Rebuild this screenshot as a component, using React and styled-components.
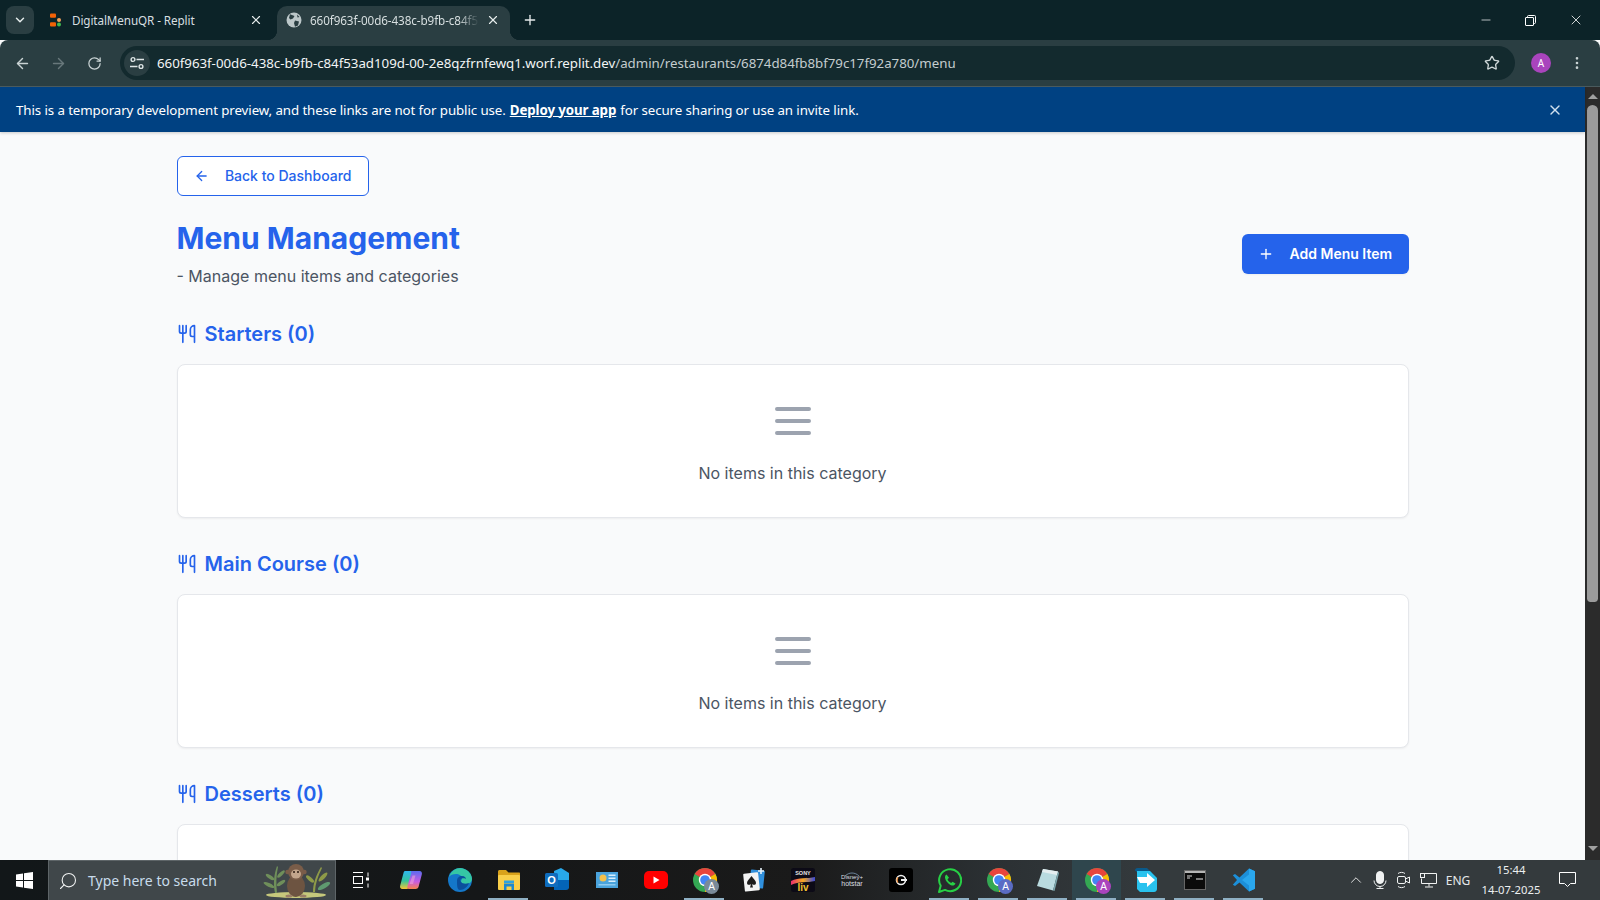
import React from "react";
import styled, { createGlobalStyle } from "styled-components";
import { ArrowLeft, ArrowRight, Plus, Utensils, RotateCw, Star, X, ChevronDown, Minus, EllipsisVertical, Search, ChevronUp } from "lucide-react";

const Global = createGlobalStyle`
  html, body { margin: 0; padding: 0; height: 900px; overflow: hidden; background: #f9fafb; }
  * { box-sizing: border-box; }
`;

const Shell = styled.div`
  width: 1600px; height: 900px; display: flex; flex-direction: column; overflow: hidden;
  font-family: "Inter", sans-serif;
`;

/* ---------- browser chrome ---------- */
const TabStrip = styled.div`
  height: 40px; flex: none; background: #0c2328; display: flex; align-items: flex-end; padding-left: 6px; color: #dfe6e7;
  font-family: "Noto Sans", sans-serif; font-size: 11.7px;
`;
const TabMenuButton = styled.div`
  width: 28px; height: 28px; margin-bottom: 6px; border-radius: 8px; background: #2a3e42;
  display: flex; align-items: center; justify-content: center; color: #e6ecec;
`;
const Tab = styled.div`
  width: 233px; height: 34px; margin-left: ${p => p.$ml}px; padding: 0 8px 6px ${p => p.$pl}px; display: flex; align-items: center; position: relative;
  border-radius: 10px 10px 0 0; background: ${p => (p.$active ? "#2a3e42" : "transparent")};
  ${p => p.$active && `
    &::before, &::after { content: ""; position: absolute; bottom: 0; width: 10px; height: 10px; }
    &::before { left: -10px; background: radial-gradient(circle at 0 0, transparent 10px, #2a3e42 10.5px); }
    &::after { right: -10px; background: radial-gradient(circle at 100% 0, transparent 10px, #2a3e42 10.5px); }
  `}
`;
const TabFavicon = styled.div`
  width: 16px; height: 16px; margin-right: 8px; flex: none; display: flex; align-items: center; justify-content: center;
`;
const TabTitle = styled.div`
  flex: 1; overflow: hidden; white-space: nowrap; color: #d7dfe0; letter-spacing: -0.1px;
  ${p => p.$fade && `margin-right: 5px; mask-image: linear-gradient(90deg, #000 88%, transparent 100%); -webkit-mask-image: linear-gradient(90deg, #000 88%, transparent 100%);`}
`;
const TabClose = styled.div`
  width: 18px; height: 18px; flex: none; display: flex; align-items: center; justify-content: center; color: #e6ecec;
`;
const NewTab = styled.div`
  width: 20px; height: 34px; padding-bottom: 6px; margin-left: 10px; display: flex; align-items: center; justify-content: center; color: #e6ecec;
`;
const WindowControls = styled.div`
  margin-left: auto; height: 40px; display: flex; align-items: center; color: #fff; padding-right: 2px;
`;
const WindowButton = styled.div`
  width: 45px; height: 40px; display: flex; align-items: center; justify-content: center;
`;
const Toolbar = styled.div`
  height: 47px; flex: none; background: #2a3e42; border-bottom: 1px solid #4a5a5d; border-radius: 8px 8px 0 0;
  display: flex; align-items: center; padding: 0 0 0 4px; color: #cfd8d9;
`;
const NavButton = styled.div`
  width: 36px; height: 36px; display: flex; align-items: center; justify-content: center; color: ${p => (p.$off ? "#68787b" : "#c9d3d4")};
`;
const Omnibox = styled.div`
  width: 1395px; flex: none; height: 34px; margin-left: 8px; border-radius: 17px; background: #132a2e; display: flex; align-items: center; padding: 0 15px 0 4px;
`;
const SiteChip = styled.div`
  width: 26px; height: 26px; border-radius: 50%; background: #2a3e42; display: flex; align-items: center; justify-content: center; color: #dfe6e7; flex: none;
`;
const Url = styled.div`
  margin-left: 7px; flex: 1; font-family: "Noto Sans", sans-serif; font-size: 13.3px; color: #c4cdce; white-space: nowrap; letter-spacing: -0.02px;
  b { font-weight: 400; color: #f2f5f5; }
`;
const Avatar = styled.div`
  width: 20px; height: 20px; margin-left: 16px; border-radius: 50%; background: #a944bd; color: #fff; font: 10px "Noto Sans", sans-serif;
  display: flex; align-items: center; justify-content: center; flex: none;
`;
const KebabButton = styled.div`
  width: 24px; margin-left: 14px; display: flex; justify-content: center; color: #c9d3d4;
`;

/* ---------- page viewport ---------- */
const Viewport = styled.div`
  flex: 1; min-height: 0; display: flex; overflow: hidden;
`;
const PageColumn = styled.div`
  flex: 1; min-width: 0; display: flex; flex-direction: column; background: #f9fafb;
`;
const Banner = styled.div`
  height: 45px; flex: none; background: #004182; color: #fff; display: flex; align-items: center; padding: 0 22px 0 16px;
  font-family: "Noto Sans", sans-serif; font-size: 13.3px; letter-spacing: -0.09px; box-shadow: 0 1px 3px rgba(0,0,0,.2); position: relative;
  a { color: #fff; font-weight: 700; text-decoration: underline; margin: 0 4px; }
`;
const BannerClose = styled.div`
  margin-left: auto; color: #cfe0ee; display: flex;
`;
const Page = styled.main`
  flex: 1; min-height: 0; overflow: hidden; padding: 24px 176.5px 0;
`;
const BackButton = styled.button`
  height: 40px; width: 192px; padding: 0 16px; display: flex; align-items: center; gap: 16px; background: #fff; color: #2563eb;
  border: 1px solid #2563eb; border-radius: 6px; font: 500 14px/20px "Inter", sans-serif; margin-bottom: 24px; white-space: nowrap;
`;
const HeaderRow = styled.div`
  display: flex; justify-content: space-between; align-items: center; margin-bottom: 32px;
`;
const Title = styled.h1`
  margin: 0 0 8px; font: 700 30px/36px "Inter", sans-serif; color: #2563eb;
`;
const Subtitle = styled.p`
  margin: 0; font: 400 16px/24px "Inter", sans-serif; color: #4b5563;
`;
const AddButton = styled.button`
  height: 40px; width: 167px; padding: 0 16px; display: flex; align-items: center; gap: 16px; background: #2563eb; color: #fff; border: 0;
  border-radius: 6px; font: 600 14px/20px "Inter", sans-serif; white-space: nowrap; box-shadow: 0 1px 2px rgba(0,0,0,.05);
`;
const Section = styled.section`
  margin-bottom: 32px;
`;
const SectionTitle = styled.h2`
  margin: 0 0 16px; height: 28px; display: flex; align-items: center; gap: 8px; font: 600 20px/28px "Inter", sans-serif; color: #2563eb;
`;
const EmptyCard = styled.div`
  background: #fff; border: 1px solid #e5e7eb; border-radius: 8px; padding: 32px; display: flex; flex-direction: column; align-items: center; gap: 16px;
  box-shadow: 0 1px 2px rgba(0,0,0,.05); color: #9ca3af;
`;
const EmptyText = styled.p`
  margin: 0; font: 400 16px/24px "Inter", sans-serif; color: #4b5563;
`;

/* ---------- scrollbar ---------- */
const Scrollbar = styled.div`
  width: 15px; flex: none; background: #2b2b2b; display: flex; flex-direction: column; align-items: center; padding-bottom: 3px;
`;
const ScrollArrow = styled.div`
  height: 18px; flex: none; display: flex; align-items: center; justify-content: center;
  &::before { content: ""; border-left: 5px solid transparent; border-right: 5px solid transparent;
    ${p => (p.$down ? "border-top: 5px solid #a0a0a0;" : "border-bottom: 5px solid #a0a0a0;")} }
`;
const ScrollThumb = styled.div`
  width: 11px; height: 497px; border-radius: 6px 6px 4px 4px; background: #9b9b9b;
`;
const ScrollSpacer = styled.div`flex: 1;`;

/* ---------- taskbar ---------- */
const Taskbar = styled.footer`
  height: 40px; flex: none; display: flex; align-items: stretch; color: #fff;
  background: linear-gradient(90deg, #121719 0%, #151718 30%, #1a1a1a 50%, #2b3033 62%, #343a3d 72%, #343a3d 100%);
  font-family: "Noto Sans", sans-serif;
`;
const StartButton = styled.div`
  width: 48px; display: flex; align-items: center; justify-content: center;
`;
const SearchBox = styled.div`
  width: 288px; background: #40474a; border: 1px solid #5e6568; border-bottom: 0; display: flex; align-items: center; padding-left: 9px; gap: 10px; position: relative;
  font-size: 14px; color: #c8dcec; overflow: hidden;
`;
const SearchArt = styled.div`
  position: absolute; right: 2px; top: 0;
`;
const FlippedSearch = styled(Search)`
  transform: scaleX(-1); flex: none;
`;
const TaskSlot = styled.div`
  width: ${p => p.$w || 49}px; flex: none; display: flex; align-items: center; justify-content: center; position: relative;
  background: ${p => (p.$focus ? "#2f464d" : "transparent")};
  ${p => p.$open && `&::after { content: ""; position: absolute; left: 4px; right: 5px; bottom: 0; height: 2px; background: #8fb0c4; }`}
`;
const Tray = styled.div`
  margin-left: auto; display: flex; align-items: center; height: 100%; color: #f0f2f2; padding-right: 9px;
`;
const TrayIcon = styled.div`
  width: ${p => p.$w}px; display: flex; justify-content: center;
`;
const TrayLang = styled.div`
  width: 36px; font-size: 12px; text-align: center; margin-right: 4px; color: #e6e9ea;
`;
const Clock = styled.div`
  width: 62px; text-align: center; font-size: 11.3px; line-height: 20px; color: #eceff0; white-space: nowrap;
`;
const NotifyButton = styled.div`
  width: 48px; margin-left: 1px; display: flex; justify-content: center;
`;

/* ---------- drawn icons ---------- */
const ReplitIcon = () => (
  <svg width="16" height="16" viewBox="0 0 16 16">
    <rect x="2" y="1.5" width="6" height="4.2" rx="1" fill="#f26207" />
    <rect x="2" y="10.3" width="6" height="4.2" rx="1" fill="#f26207" />
    <circle cx="11" cy="8" r="2" fill="#f5a25d" />
    <circle cx="11" cy="12.5" r="2" fill="#3fb950" />
  </svg>
);
const GlobeIcon = () => (
  <svg width="16" height="16" viewBox="0 0 16 16">
    <circle cx="8" cy="8" r="7.5" fill="#bcc7c9" />
    <path d="M4 2.200 8.500 4 7 6.500 4.500 7.500 3 6zM9 8.500l4 1-1 4-3 1.200L8 11zM11 2.500l2.500 2.500-2 .5z" fill="#2a3e42" />
  </svg>
);
const RestoreIcon = () => (
  <svg width="11" height="11" viewBox="0 0 11 11" fill="none" stroke="#fff">
    <rect x="0.5" y="2.5" width="8" height="8" rx="0.5" />
    <path d="M2.5 2.5v-1a1 1 0 0 1 1-1h6a1 1 0 0 1 1 1v6a1 1 0 0 1-1 1h-1" />
  </svg>
);
const TuneIcon = () => (
  <svg width="16" height="14" viewBox="0 0 16 14" fill="none" stroke="#dfe6e7" strokeWidth="1.400">
    <circle cx="4" cy="3.500" r="1.900" />
    <path d="M7.500 3.500H15M1 10.500h7.500" />
    <circle cx="12" cy="10.500" r="1.900" />
  </svg>
);
const WinLogo = () => (
  <svg width="17" height="17" viewBox="0 0 17 17" fill="#fff">
    <path d="M0 2.400 7 1.400V8H0zM8 1.200 17 0v8H8zM0 9h7v6.600L0 14.600zM8 9h9v8l-9-1.200z" />
  </svg>
);
const TaskView = () => (
  <svg width="18" height="16" viewBox="0 0 18 16" fill="none" stroke="#fff" strokeWidth="1">
    <path d="M1 .5h10M1 15.500h10M16 .5v4M16 11.500v4" />
    <rect x="1.500" y="4.500" width="9" height="7" />
    <rect x="14" y="5.500" width="3" height="3" fill="#fff" stroke="none" />
  </svg>
);
const Copilot = () => (
  <svg width="24" height="24" viewBox="0 0 24 24">
    <defs>
      <linearGradient id="cpA" x1="0" y1="0" x2="0" y2="1"><stop offset="0" stopColor="#2fb7f0" /><stop offset=".55" stopColor="#35c59a" /><stop offset="1" stopColor="#f7c733" /></linearGradient>
      <linearGradient id="cpB" x1="0" y1="0" x2="0" y2="1"><stop offset="0" stopColor="#5a6cf0" /><stop offset=".6" stopColor="#c95ce0" /><stop offset="1" stopColor="#f7834a" /></linearGradient>
    </defs>
    <path d="M6 3h7c1.500 0 2 1 1.600 2.400L11 18c-.5 1.600-1.500 3-3.500 3H3.500C1.500 21 .6 19.400 1.200 17.500L4.500 5C4.800 3.800 5.200 3 6 3z" fill="url(#cpA)" />
    <path d="M12 3h8.500c1.900 0 2.900 1.600 2.300 3.500L19.500 19c-.5 1.300-1.500 2-2.800 2H10c-1.400 0-2-1-1.600-2.400L12 6c.3-1.200 0-3 0-3z" fill="url(#cpB)" />
    <path d="M13.500 7.500 10.500 16h3.500l2.500-8.500z" fill="#f3a7d8" opacity=".55" />
  </svg>
);
const Edge = () => (
  <svg width="24" height="24" viewBox="0 0 24 24">
    <circle cx="12" cy="12" r="12" fill="#1477c9" />
    <path d="M1 9C3 3 8 0 12 0c6 0 12 5 12 11 0 3-3 5-6 5-3 0-5-1-5-3 0-1 1-1 1-3 0-2-3-4-6-4C5 6 2 7 1 9z" fill="#35c6a4" />
    <path d="M9 13c0-3 2-5 5-5 3 0 4 2 4 3 0-.1-2-1-4-.5-2 .5-2 2-1 3.500 1 1.500 4 2.500 8 1-1 3.500-5 7-9 7-3 0-3-5-3-9z" fill="#0b4f9c" />
  </svg>
);
const Explorer = () => (
  <svg width="24" height="22" viewBox="0 0 24 22">
    <path d="M1 2.500C1 1.700 1.700 1 2.500 1H9l2.500 2.500H22c.6 0 1 .4 1 1V7H1z" fill="#d9a21b" />
    <rect x="1" y="6" width="22" height="15" rx="1" fill="#f9cf4a" />
    <path d="M7 21v-6.500h10V21h-2.500v-3.500h-5V21z" fill="#1d88cf" />
    <rect x="7" y="11.500" width="10" height="2.500" fill="#2ea3e0" />
  </svg>
);
const Outlook = () => (
  <svg width="25" height="24" viewBox="0 0 25 24">
    <path d="M9 3 16 0l8 5v13c0 2-1 3-3 3H10z" fill="#28a8ea" />
    <path d="M9 12h15v7c0 2-1 3-3 3H9z" fill="#0364b8" />
    <rect x="0" y="5" width="13" height="14" rx="1.500" fill="#0f6cbd" />
    <text x="6.500" y="16" textAnchor="middle" fontSize="11" fontWeight="700" fontFamily="Liberation Sans" fill="#fff">O</text>
  </svg>
);
const NewsApp = () => (
  <svg width="22" height="16" viewBox="0 0 22 16">
    <rect width="22" height="16" fill="#4aa3dc" />
    <circle cx="7" cy="6" r="3.500" fill="#f3c04c" />
    <rect x="12.500" y="2.500" width="7" height="1.500" fill="#d9eefb" />
    <rect x="12.500" y="5.500" width="7" height="1.500" fill="#d9eefb" />
    <rect x="12.500" y="8.500" width="7" height="1.500" fill="#d9eefb" />
    <rect x="2.500" y="12" width="17" height="1.500" fill="#8ecbf0" />
  </svg>
);
const YouTube = () => (
  <svg width="24" height="18" viewBox="0 0 24 18">
    <rect width="24" height="18" rx="5" fill="#ff0000" />
    <path d="M9.500 5.500v7l6-3.500z" fill="#fff" />
  </svg>
);
const Chrome = ({ badge }) => (
  <svg width="24" height="24" viewBox="0 0 24 24" overflow="visible">
    <circle cx="12" cy="12" r="12" fill="#34a853" />
    <path d="M12 12 1.600 6A12 12 0 0 1 22.400 6z" fill="#e8453c" />
    <path d="M12 12 22.400 6A12 12 0 0 1 12 24z" fill="#fbbc04" />
    <circle cx="12" cy="12" r="6.200" fill="#fff" />
    <circle cx="12" cy="12" r="4.800" fill="#4285f4" />
    <circle cx="18.500" cy="18.500" r="7.500" fill={badge} />
    <text x="18.500" y="22" textAnchor="middle" fontSize="10" fontFamily="Liberation Sans" fill="#fff">A</text>
  </svg>
);
const Cards = () => (
  <svg width="24" height="24" viewBox="0 0 24 24">
    <rect x="8" y="2" width="14" height="18" rx="1" transform="rotate(6 15 11)" fill="#2f8fdc" />
    <rect x="2" y="5" width="15" height="18" rx="1" transform="rotate(-6 9 14)" fill="#f3f4f4" />
    <path d="M9.500 8c2 3 4.500 4.500 4.500 7 0 2-2.500 2.500-4 1l1 3.500H8l1-3.500c-1.500 1.500-4 1-4-1 0-2.500 2.500-4 4.500-7z" fill="#1c1c1c" />
    <path d="M19 0v6M16 3h6" stroke="#e7f3fb" strokeWidth="1.600" />
  </svg>
);
const Sony = () => (
  <svg width="24" height="24" viewBox="0 0 24 24">
    <defs><linearGradient id="sn" x1="0" y1="0" x2="1" y2="0"><stop offset="0" stopColor="#ea2f6f" /><stop offset=".5" stopColor="#f7a823" /><stop offset="1" stopColor="#3b4ad8" /></linearGradient></defs>
    <rect width="24" height="24" rx="2.500" fill="#0c0a16" />
    <path d="M0 13c8-4 16-2 24-4v4c-8 2-16 0-24 4z" fill="url(#sn)" />
    <text x="12" y="6.500" textAnchor="middle" fontSize="5.500" fontWeight="700" fontFamily="Liberation Sans" fill="#e4e4e4">SONY</text>
    <text x="12" y="22.500" textAnchor="middle" fontSize="10" fontWeight="700" fontFamily="Liberation Sans" fill="#f2c230">liv</text>
  </svg>
);
const Hotstar = () => (
  <svg width="22" height="18" viewBox="0 0 22 18" fill="none">
    <path d="M4 5c4-4 10-4 14 0" stroke="#7f9cb8" strokeWidth=".8" />
    <text x="11" y="8" textAnchor="middle" fontSize="6" fontFamily="Liberation Sans" fill="#dcdfe1">Disney+</text>
    <text x="11" y="15" textAnchor="middle" fontSize="7" fontFamily="Liberation Sans" fill="#dcdfe1">hotstar</text>
  </svg>
);
const BlackC = () => (
  <svg width="24" height="24" viewBox="0 0 24 24">
    <rect width="24" height="24" rx="3" fill="#000" />
    <circle cx="12" cy="12" r="4.500" fill="none" stroke="#eee" strokeWidth="1.600" />
    <path d="M9 14.500a3.500 3.500 0 0 1 0-5" fill="none" stroke="#f28a2e" strokeWidth="1.200" />
    <rect x="12" y="11" width="6" height="2" fill="#eee" />
  </svg>
);
const WhatsApp = () => (
  <svg width="24" height="25" viewBox="0 0 24 25" fill="none">
    <path d="M1 24l1.700-6.200A11 11 0 1 1 7 21.900z" stroke="#27d045" strokeWidth="2" fill="none" strokeLinejoin="round" />
    <path d="M8.500 6.500c-1.500 1-2 2.500-1 5 1 2.500 4 5.500 6.500 6 1.500.3 3-.5 3.500-2l-3-1.800-1.300 1.300c-1.500-.5-3.200-2.200-3.700-3.700L11 9.700z" fill="#27d045" />
  </svg>
);
const Notepad = () => (
  <svg width="24" height="26" viewBox="0 0 24 26">
    <path d="M7 2l15 2.500-5 19L1 19z" fill="#b9dbe0" />
    <path d="M7 2l15 2.500-1 3.500L6 5z" fill="#e4eef0" />
    <path d="M17 23.500 22 4.500 23 6 18.500 24z" fill="#7ba7ae" />
  </svg>
);
const ForwardApp = () => (
  <svg width="24" height="24" viewBox="0 0 24 24">
    <path d="M1 2.500C1 1 2 0 3.500 0H13l5 5H4z" fill="#0a5a8a" />
    <path d="M3 3h13l7 7v11c0 1.500-1 3-3 3H6l-3-3z" fill="#29c2ee" />
    <path d="M3 9h10V5l8 7-8 7v-4H6z" fill="#fff" />
  </svg>
);
const Cmd = () => (
  <svg width="22" height="20" viewBox="0 0 22 20">
    <rect x=".5" y=".5" width="21" height="19" fill="#0b0b0b" stroke="#666" />
    <rect x="1" y="1" width="20" height="2" fill="#b6b6b6" />
    <path d="M3 6h5M3 8h3" stroke="#ddd" strokeWidth="1.200" />
    <path d="M12 9h7" stroke="#eee" strokeWidth="1" />
  </svg>
);
const VSCode = () => (
  <svg width="24" height="24" viewBox="0 0 24 24">
    <path d="M17 .5 7.500 9.500 3 6 .8 7.200 5 12 .8 16.800 3 18l4.500-3.500L17 23.500l6-2.800V3.300z" fill="#1c8fd9" />
    <path d="M17 .5l6 2.800v17.400l-6 2.800zM17 6.500 10 12l7 5.500z" fill="#2aa7ee" />
  </svg>
);
const Monkey = () => (
  <svg width="72" height="38" viewBox="0 0 72 38">
    <ellipse cx="35" cy="34" rx="30" ry="3" fill="#c6c87c" />
    <g fill="#6f8f5a">
      <path d="M14 32C12 22 13 14 16 5l1 1C15 15 15 23 16 32z" />
      <ellipse cx="9" cy="16" rx="5" ry="1.700" transform="rotate(35 9 16)" />
      <ellipse cx="20" cy="13" rx="5" ry="1.700" transform="rotate(-45 20 13)" />
      <ellipse cx="8" cy="24" rx="6" ry="1.800" transform="rotate(25 8 24)" />
      <ellipse cx="20" cy="22" rx="5" ry="1.700" transform="rotate(-35 20 22)" />
    </g>
    <g fill="#8e9a48">
      <path d="M52 31c0-8 3-17 8-25l1 1c-4 8-7 16-7 24z" />
      <ellipse cx="49" cy="18" rx="5" ry="1.800" transform="rotate(40 49 18)" />
      <ellipse cx="62" cy="16" rx="6" ry="2" transform="rotate(-45 62 16)" />
      <ellipse cx="63" cy="25" rx="7" ry="2.400" transform="rotate(-30 63 25)" fill="#5f9a70" />
    </g>
    <ellipse cx="35" cy="25" rx="9" ry="11" fill="#6d5441" />
    <ellipse cx="35" cy="11" rx="8" ry="8" fill="#7a5d49" />
    <circle cx="26.500" cy="11" r="2.200" fill="#7a5d49" />
    <circle cx="43.500" cy="11" r="2.200" fill="#7a5d49" />
    <ellipse cx="35" cy="13" rx="5" ry="4.500" fill="#c2a58c" />
    <circle cx="33" cy="11" r="1" fill="#2b1c12" />
    <circle cx="37" cy="11" r="1" fill="#2b1c12" />
    <ellipse cx="28" cy="35" rx="3.500" ry="1.500" fill="#9a7e66" />
    <ellipse cx="42" cy="35" rx="3.500" ry="1.500" fill="#9a7e66" />
  </svg>
);
const EmptyMenuIcon = () => (
  <svg width="48" height="48" viewBox="0 0 24 24" fill="none" stroke="currentColor" strokeWidth="2" strokeLinecap="round">
    <path d="M4 6h16M4 12h16M4 18h16" />
  </svg>
);
const MicTray = () => (
  <svg width="14" height="18" viewBox="0 0 14 18" fill="none" stroke="#f0f2f2">
    <rect x="3.500" y="0.500" width="7" height="12" rx="3.500" fill="#f0f2f2" />
    <path d="M1 9.500a6 6 0 0 0 12 0M7 15.500v2M3.500 17.500h7" />
  </svg>
);
const CameraTray = () => (
  <svg width="16" height="18" viewBox="0 0 16 18" fill="none" stroke="#f0f2f2">
    <rect x="1.500" y="5.500" width="8" height="7" rx="1.500" />
    <path d="M9.500 8l4-2v6l-4-2M2 2.500c2-1.500 5-1.500 7 0M2 15.500c2 1.500 5 1.500 7 0" />
  </svg>
);
const NetworkTray = () => (
  <svg width="17" height="15" viewBox="0 0 17 15" fill="none" stroke="#f0f2f2">
    <path d="M4.500 .5H16.500V10.500H1.500V5.500" />
    <path d="M9 10.500v3M5 14h8" />
    <rect x=".5" y=".5" width="4" height="4" />
  </svg>
);
const Notify = () => (
  <svg width="17" height="16" viewBox="0 0 17 16" fill="none" stroke="#fff">
    <path d="M.5.500h16v11h-5l-3 3-3-3h-5z" />
  </svg>
);

const sections = ["Starters", "Main Course", "Desserts"];

export default function App() {
  return (
    <Shell>
      <Global />
      <TabStrip>
        <TabMenuButton><ChevronDown size={14} strokeWidth={2.500} /></TabMenuButton>
        <Tab $ml={6} $pl={8}>
          <TabFavicon><ReplitIcon /></TabFavicon>
          <TabTitle>DigitalMenuQR - Replit</TabTitle>
          <TabClose><X size={14} /></TabClose>
        </Tab>
        <Tab $ml={4} $pl={9} $active>
          <TabFavicon><GlobeIcon /></TabFavicon>
          <TabTitle $fade>660f963f-00d6-438c-b9fb-c84f53ad109d</TabTitle>
          <TabClose><X size={14} /></TabClose>
        </Tab>
        <NewTab><Plus size={16} /></NewTab>
        <WindowControls>
          <WindowButton><Minus size={14} strokeWidth={1.200} /></WindowButton>
          <WindowButton><RestoreIcon /></WindowButton>
          <WindowButton><X size={16} strokeWidth={1.200} /></WindowButton>
        </WindowControls>
      </TabStrip>
      <Toolbar>
        <NavButton><ArrowLeft size={17} /></NavButton>
        <NavButton $off><ArrowRight size={17} /></NavButton>
        <NavButton><RotateCw size={15} /></NavButton>
        <Omnibox>
          <SiteChip><TuneIcon /></SiteChip>
          <Url><b>660f963f-00d6-438c-b9fb-c84f53ad109d-00-2e8qzfrnfewq1.worf.replit.dev</b>/admin/restaurants/6874d84fb8bf79c17f92a780/menu</Url>
          <Star size={16} color="#cfd8d9" />
        </Omnibox>
        <Avatar>A</Avatar>
        <KebabButton><EllipsisVertical size={16} /></KebabButton>
      </Toolbar>
      <Viewport>
        <PageColumn>
          <Banner>
            This is a temporary development preview, and these links are not for public use.
            <a>Deploy your app</a>
            for secure sharing or use an invite link.
            <BannerClose><X size={16} /></BannerClose>
          </Banner>
          <Page>
            <BackButton><ArrowLeft size={16} />Back to Dashboard</BackButton>
            <HeaderRow>
              <div>
                <Title>Menu Management</Title>
                <Subtitle>- Manage menu items and categories</Subtitle>
              </div>
              <AddButton><Plus size={16} />Add Menu Item</AddButton>
            </HeaderRow>
            {sections.map(name => (
              <Section key={name}>
                <SectionTitle><Utensils size={20} strokeWidth={2} />{name} (0)</SectionTitle>
                <EmptyCard>
                  <EmptyMenuIcon />
                  <EmptyText>No items in this category</EmptyText>
                </EmptyCard>
              </Section>
            ))}
          </Page>
        </PageColumn>
        <Scrollbar>
          <ScrollArrow />
          <ScrollThumb />
          <ScrollSpacer />
          <ScrollArrow $down />
        </Scrollbar>
      </Viewport>
      <Taskbar>
        <StartButton><WinLogo /></StartButton>
        <SearchBox>
          <FlippedSearch size={20} strokeWidth={1.300} color="#f0f2f2" />
          Type here to search
          <SearchArt><Monkey /></SearchArt>
        </SearchBox>
        <TaskSlot $w={50}><TaskView /></TaskSlot>
        <TaskSlot><Copilot /></TaskSlot>
        <TaskSlot><Edge /></TaskSlot>
        <TaskSlot $open><Explorer /></TaskSlot>
        <TaskSlot><Outlook /></TaskSlot>
        <TaskSlot><NewsApp /></TaskSlot>
        <TaskSlot><YouTube /></TaskSlot>
        <TaskSlot $open><Chrome badge="#7a8a99" /></TaskSlot>
        <TaskSlot><Cards /></TaskSlot>
        <TaskSlot><Sony /></TaskSlot>
        <TaskSlot><Hotstar /></TaskSlot>
        <TaskSlot><BlackC /></TaskSlot>
        <TaskSlot $open><WhatsApp /></TaskSlot>
        <TaskSlot $open><Chrome badge="#5a6cc4" /></TaskSlot>
        <TaskSlot $open><Notepad /></TaskSlot>
        <TaskSlot $open $focus><Chrome badge="#a944bd" /></TaskSlot>
        <TaskSlot $open><ForwardApp /></TaskSlot>
        <TaskSlot $open><Cmd /></TaskSlot>
        <TaskSlot $open><VSCode /></TaskSlot>
        <Tray>
          <TrayIcon $w={24}><ChevronUp size={18} strokeWidth={1.200} /></TrayIcon>
          <TrayIcon $w={24}><MicTray /></TrayIcon>
          <TrayIcon $w={24}><CameraTray /></TrayIcon>
          <TrayIcon $w={24}><NetworkTray /></TrayIcon>
          <TrayLang>ENG</TrayLang>
          <Clock>15:44<br />14-07-2025</Clock>
          <NotifyButton><Notify /></NotifyButton>
        </Tray>
      </Taskbar>
    </Shell>
  );
}
